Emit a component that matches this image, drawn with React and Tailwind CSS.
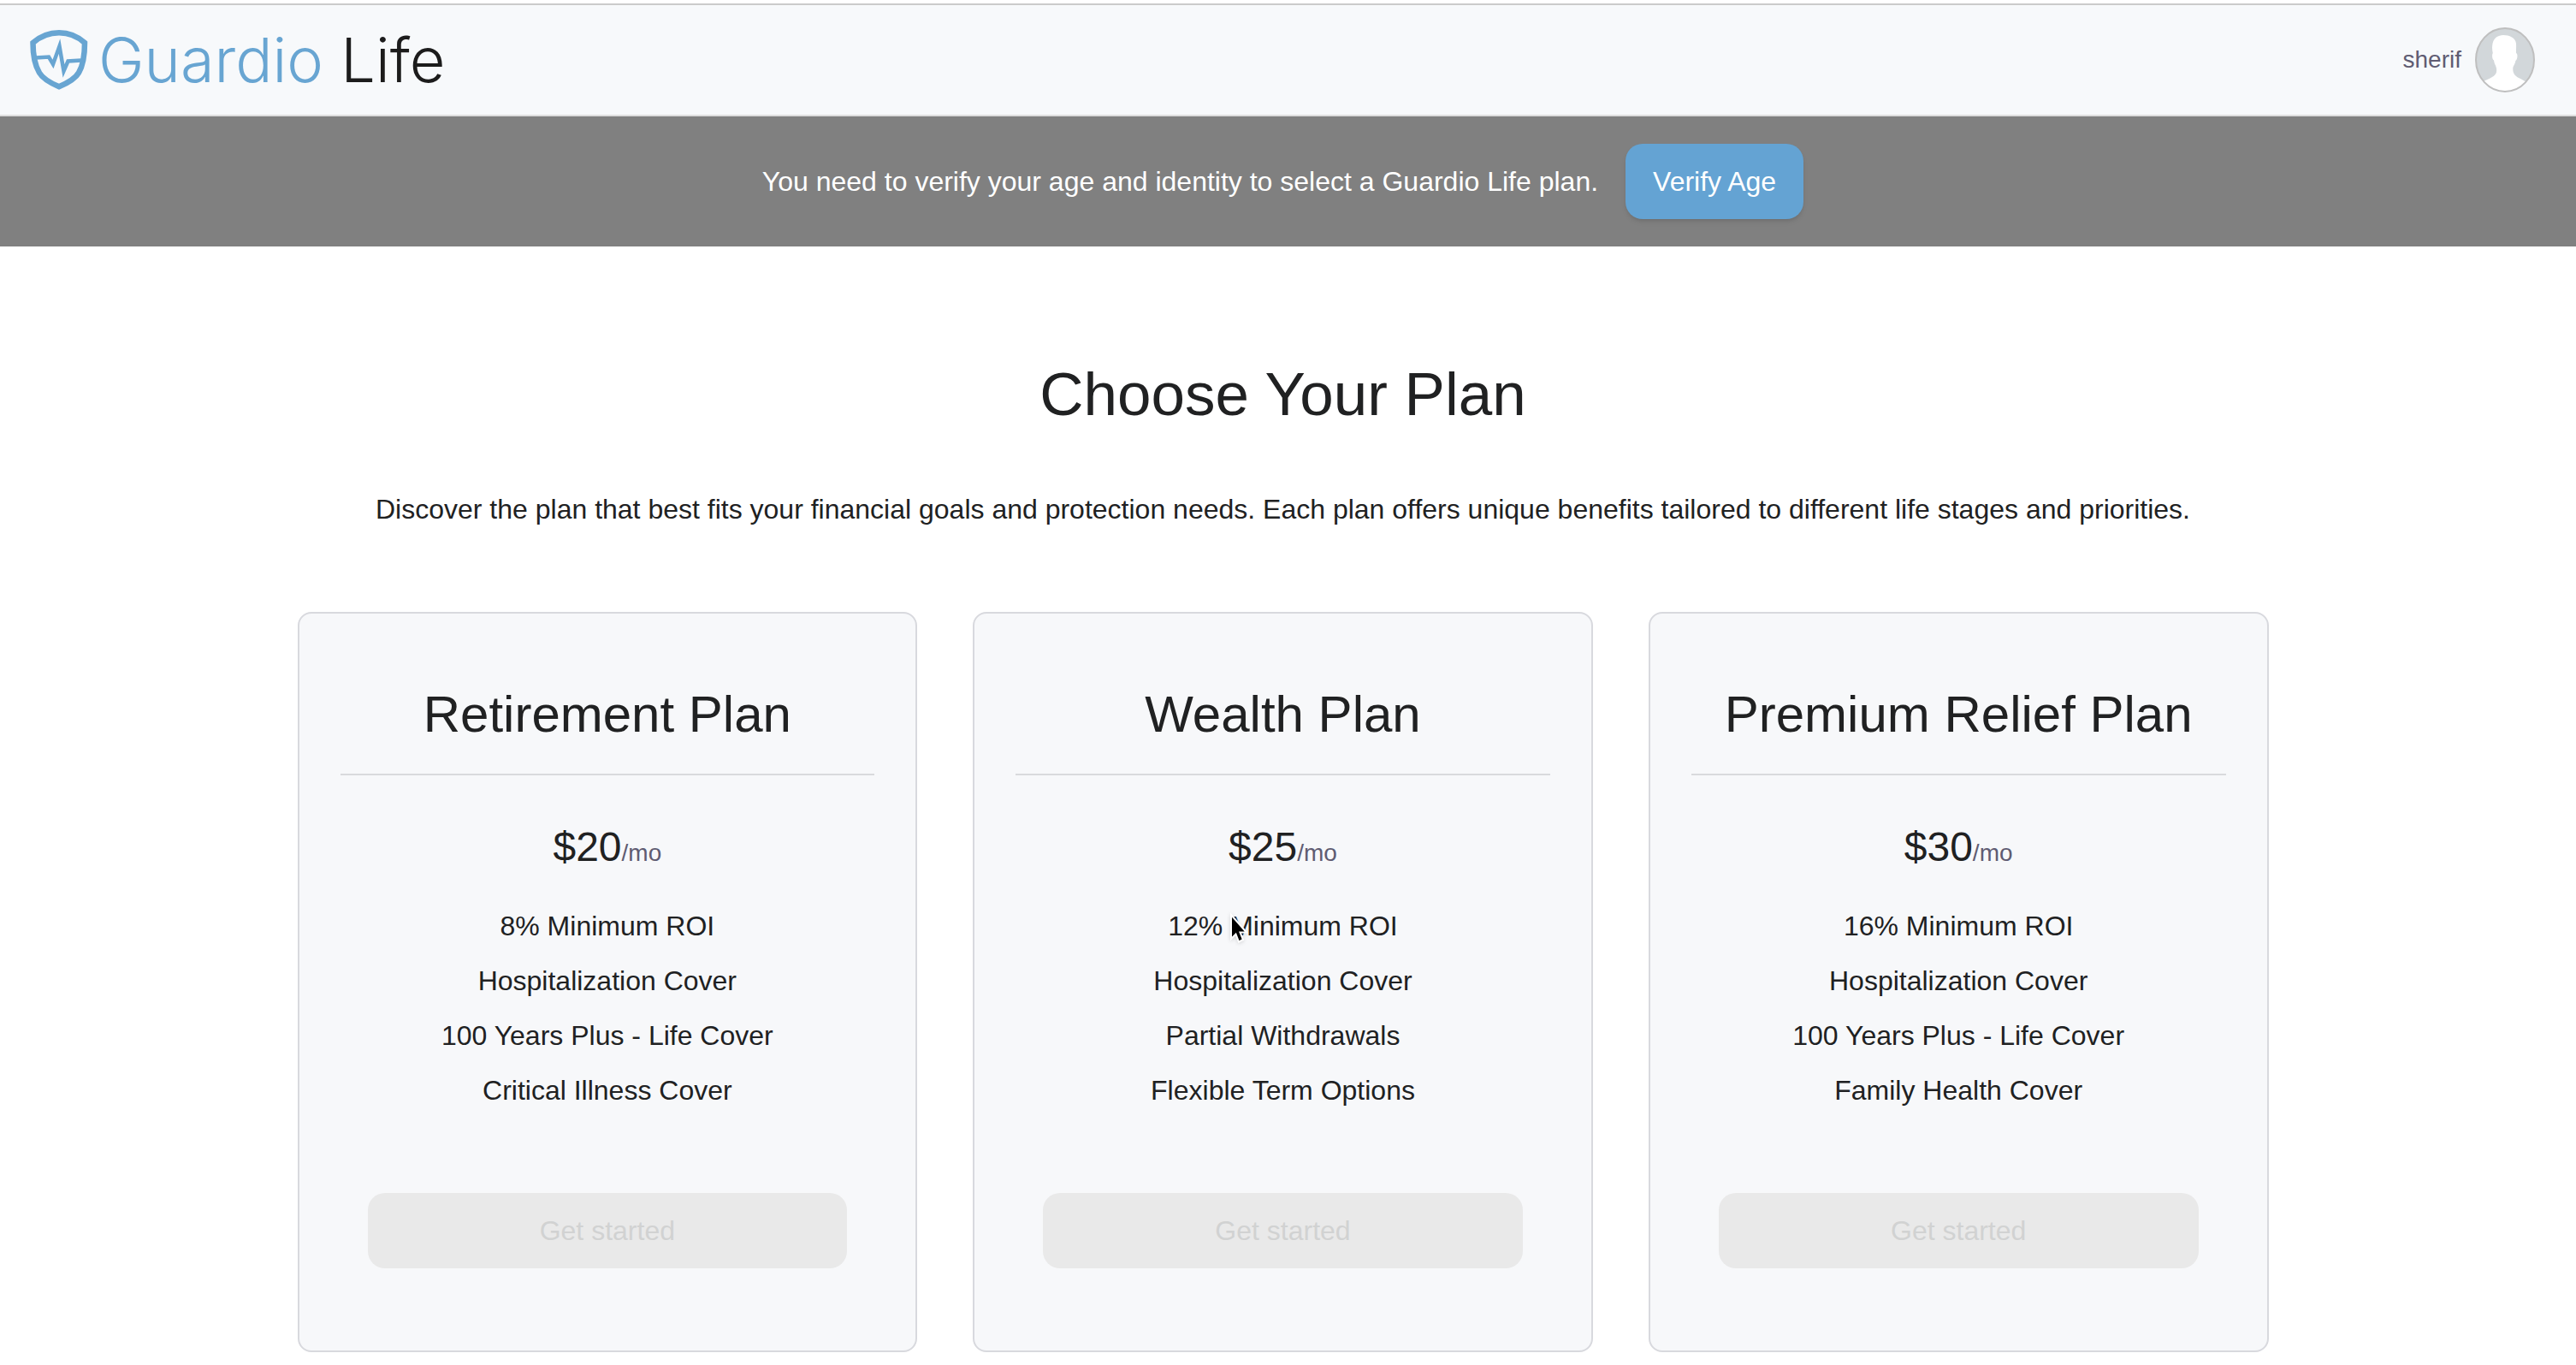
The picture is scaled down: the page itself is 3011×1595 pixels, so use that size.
const plans = [
  {
    name: 'Retirement Plan',
    price: '$20',
    features: ['8% Minimum ROI', 'Hospitalization Cover', '100 Years Plus - Life Cover', 'Critical Illness Cover'],
  },
  {
    name: 'Wealth Plan',
    price: '$25',
    features: ['12% Minimum ROI', 'Hospitalization Cover', 'Partial Withdrawals', 'Flexible Term Options'],
    pointer: true,
  },
  {
    name: 'Premium Relief Plan',
    price: '$30',
    features: ['16% Minimum ROI', 'Hospitalization Cover', '100 Years Plus - Life Cover', 'Family Health Cover'],
  },
];

function ShieldLogo() {
  return (
    <svg viewBox="0 0 68 70" className="h-[70px] w-[68px] shrink-0" fill="none" stroke="#68a5d2" aria-hidden="true">
      <path
        d="M3.5 15Q17 3.3 34 3.3T64 15C64 26 63 40 57 50C53 57 44 62 34 66.300C24 62 15 57 11 50C5 40 3.500 26 3.500 15Z"
        strokeWidth="6.500"
      />
      <path d="M7 32.500L22 31.500L27 40L34.500 19L39.500 48L44.500 36.500L60 35.500" strokeWidth="4.500" strokeMiterlimit="10" />
    </svg>
  );
}

function Avatar() {
  return (
    <svg viewBox="0 0 70 76" className="h-[76px] w-[70px] shrink-0" role="img" aria-label="Profile picture">
      <defs>
        <clipPath id="avatar-clip">
          <ellipse cx="35" cy="38" rx="34" ry="37" />
        </clipPath>
      </defs>
      <ellipse cx="35" cy="38" rx="34" ry="37" fill="#d2d7da" />
      <g clipPath="url(#avatar-clip)">
        <path
          d="M33 9C40 9 47.500 12 48 19C48.300 24 47.800 27 48 30C50.500 31 49.500 38 47.300 39C47 43 44.500 44.500 44.300 48C44 54 47 57 51 59C55 61 57 62 60 64V76H9V64C12 61.500 16 60.500 20 58C25 55 25.500 52 25 48C24.700 45 22.500 43 22 38.500C20 37.500 19.500 32 20.800 30C20 27 19.700 23 20.500 19C21.500 12.500 27 9 33 9Z"
          fill="#ffffff"
        />
      </g>
      <ellipse cx="35" cy="38" rx="34" ry="37" fill="none" stroke="#bfbfbf" strokeWidth="2" />
    </svg>
  );
}

function Pointer() {
  return (
    <svg
      viewBox="0 0 22 38"
      className="absolute left-1/2 top-2 -ml-[62px] h-[38px] w-[22px] drop-shadow-sm"
      aria-hidden="true"
    >
      <path d="M2 3V31L7.500 25.500L11 34.500L16 32L12.500 23.500H20Z" fill="#000000" stroke="#ffffff" strokeWidth="2" />
    </svg>
  );
}

function Header() {
  return (
    <header className="mt-1 flex items-center justify-between border-y-2 border-t-[#cbcbcb] border-b-[#dedede] bg-[#f7f9fb] pl-[35px] pr-12">
      <a href="#" className="flex h-32 items-center gap-3">
        <ShieldLogo />
        <span className="font-[Inter,sans-serif] text-[72px] font-light leading-[80px] text-[#68a5d2]">
          Guardio <span className="text-[#1c1c1c]">Life</span>
        </span>
      </a>
      <div className="flex items-center gap-4">
        <span className="text-[28px] leading-10 text-[#5f5c72]">sherif</span>
        <Avatar />
      </div>
    </header>
  );
}

function VerifyBanner() {
  return (
    <section className="flex items-center justify-center gap-8 bg-[#808080] py-8 pr-3">
      <p className="text-[32px] leading-[48px] text-white">
        You need to verify your age and identity to select a Guardio Life plan.
      </p>
      <button
        type="button"
        className="h-[88px] rounded-[20px] bg-[#64a3d3] px-8 text-[32px] leading-[48px] text-white shadow-md"
      >
        Verify Age
      </button>
    </section>
  );
}

function PlanCard({ plan }) {
  return (
    <article className="rounded-2xl border-2 border-[#d8d9de] bg-[#f7f8fa] px-12 pb-24 pt-20 text-center">
      <h2 className="border-b-2 border-[#d9dadd] pb-8 text-[60px] leading-[75px]">{plan.name}</h2>
      <p className="mt-14 text-[48px] leading-[56px]">
        {plan.price}
        <span className="text-[28px] leading-none text-[#5f5c72]">/mo</span>
      </p>
      <ul className="mt-10 flex flex-col gap-4 text-[32px] leading-[48px]">
        {plan.features.map((feature, i) => (
          <li key={feature} className="relative">
            {feature}
            {plan.pointer && i === 0 && <Pointer />}
          </li>
        ))}
      </ul>
      <div className="mt-24 px-8">
        <button
          type="button"
          disabled
          className="h-[88px] w-full rounded-[20px] bg-[#e9e9e9] text-[32px] leading-[48px] text-[#d1d2d2]"
        >
          Get started
        </button>
      </div>
    </article>
  );
}

export default function App() {
  return (
    <div className="min-h-screen bg-white font-['Liberation_Sans',Arial,sans-serif] text-[#202122]">
      <Header />
      <VerifyBanner />
      <main className="pb-[14px] pr-3 pt-[133px]">
        <div className="mx-auto max-w-[2304px]">
          <h1 className="text-center text-[71px] leading-[80px]">Choose Your Plan</h1>
          <p className="mt-[70px] text-center text-[32px] leading-[48px]">
            Discover the plan that best fits your financial goals and protection needs. Each plan offers unique benefits
            tailored to different life stages and priorities.
          </p>
          <div className="mt-24 grid grid-cols-3 gap-[65px]">
            {plans.map((plan) => (
              <PlanCard key={plan.name} plan={plan} />
            ))}
          </div>
        </div>
      </main>
    </div>
  );
}
